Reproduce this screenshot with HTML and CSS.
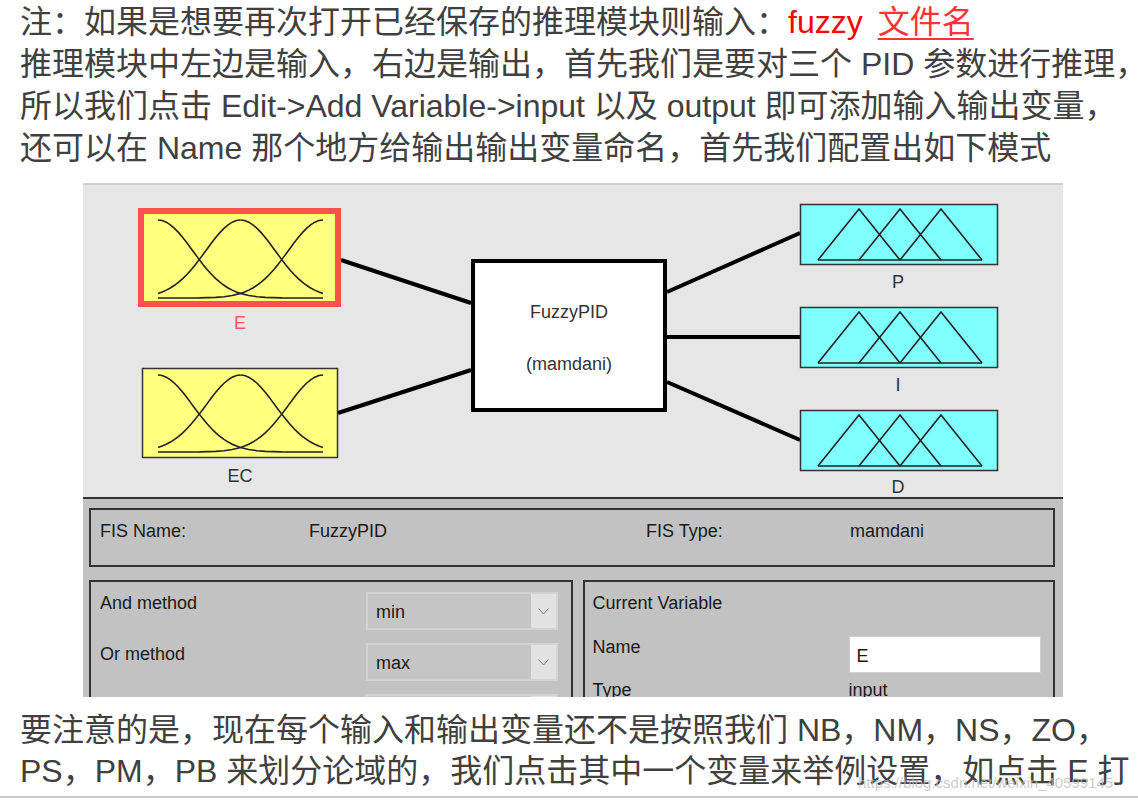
FILE: index.html
```html
<!DOCTYPE html>
<html lang="zh-CN">

<head>
  <meta charset="UTF-8">
  <meta name="viewport" content="width=device-width, initial-scale=1.0">
  <title>FuzzyPID</title>
  <link rel="stylesheet" href="styles.css">
</head>

<body>
  <div class="para intro">
    <div>注：如果是想要再次打开已经保存的推理模块则输入：<span class="red">fuzzy</span><span class="red link">文件名</span></div>
    <div>推理模块中左边是输入，右边是输出，首先我们是要对三个 PID 参数进行推理，</div>
    <div>所以我们点击 Edit-&gt;Add Variable-&gt;input 以及 output 即可添加输入输出变量，</div>
    <div>还可以在 Name 那个地方给输出输出变量命名，首先我们配置出如下模式</div>
  </div>

  <div class="shot">
    <!-- FIS 结构图 -->
    <svg class="diagram" width="980" height="314" viewBox="0 0 980 314">
      <defs>
        <path id="half" class="curve" d="M0,0 L5,0.7 L10,2.8 L15,6.2 L20,10.7 L25,16.2 L30,22.5 L35,29.3 L40,36.5 L45,43.7 L50,50.8 L55,57.6 L60,64 L65,69.8 L70,75.1 L75,79.7 L80,83.7 L85,87.1 L90,89.9 L95,92.3 L100,94.1 L110,96.8 L120,98.3 L130,99.2 L150,99.8 L200,100" />
        <path id="halfc" class="curve" d="M0,0 L5,0.7 L10,2.8 L15,6.2 L20,10.7 L25,16.2 L30,22.5 L35,29.3 L40,36.5 L45,43.7 L50,50.8 L55,57.6 L60,64 L65,69.8 L70,75.1 L75,79.7 L80,83.7 L85,87.1 L90,89.9 L95,92.3 L100,94.1" />
        <symbol id="gauss" viewBox="0 0 200 100" preserveAspectRatio="none" overflow="visible">
          <use href="#half" />
          <use href="#half" transform="translate(200,0) scale(-1,1)" />
          <use href="#halfc" transform="translate(100,0)" />
          <use href="#halfc" transform="translate(100,0) scale(-1,1)" />
        </symbol>
        <symbol id="tri" viewBox="0 0 4 1" preserveAspectRatio="none" overflow="visible">
          <polyline class="curve" points="0,1 1,0 2,1" />
          <polyline class="curve" points="1,1 2,0 3,1" />
          <polyline class="curve" points="2,1 3,0 4,1" />
          <polyline class="curve" points="0,1 4,1" />
        </symbol>
      </defs>

      <rect x="0" y="0" width="980" height="2" fill="#cfcfcf" />

      <!-- 连线 -->
      <g class="wire">
        <line x1="258" y1="77" x2="388" y2="120" />
        <line x1="255" y1="230" x2="388" y2="187" />
        <line x1="584" y1="109" x2="717" y2="50" />
        <line x1="584" y1="154" x2="717" y2="154" />
        <line x1="584" y1="199" x2="717" y2="257" />
      </g>

      <!-- 输入 -->
      <rect class="in-box selected" x="58" y="28" width="197" height="93" />
      <use href="#gauss" x="75" y="37" width="165" height="78" />
      <text class="label red-label" x="157" y="146">E</text>

      <rect class="in-box" x="59.5" y="185.5" width="195" height="89" />
      <use href="#gauss" x="75" y="192" width="165" height="77" />
      <text class="label" x="157" y="299">EC</text>

      <!-- 推理模块 -->
      <rect class="fis-node" x="390" y="78" width="192" height="149" />
      <text class="label" x="486" y="135">FuzzyPID</text>
      <text class="label" x="486" y="187">(mamdani)</text>

      <!-- 输出 -->
      <rect class="out-box" x="717.5" y="21.5" width="197" height="60" />
      <use href="#tri" x="735" y="26" width="164" height="51" />
      <text class="label" x="815" y="105">P</text>

      <rect class="out-box" x="717.5" y="124.5" width="197" height="60" />
      <use href="#tri" x="735" y="129" width="164" height="51" />
      <text class="label" x="815" y="208">I</text>

      <rect class="out-box" x="717.5" y="227.5" width="197" height="60" />
      <use href="#tri" x="735" y="232" width="164" height="51" />
      <text class="label" x="815" y="310">D</text>
    </svg>

    <div class="panel">
      <div class="fis">
        <span>FIS Name:</span>
        <span>FuzzyPID</span>
        <span>FIS Type:</span>
        <span>mamdani</span>
      </div>

      <div class="cols">
        <div class="box methods">
          <span class="lbl">And method</span>
          <div class="select"><span class="val">min</span><span class="arrow"><svg width="11" height="7" viewBox="0 0 11 7"><polyline points="0.5,0.5 5.5,6 10.5,0.5" /></svg></span></div>

          <span class="lbl">Or method</span>
          <div class="select"><span class="val">max</span><span class="arrow"><svg width="11" height="7" viewBox="0 0 11 7"><polyline points="0.5,0.5 5.5,6 10.5,0.5" /></svg></span></div>

          <!-- 第三行被截图截断，只露出下拉框顶边 -->
          <span class="lbl"></span>
          <div class="select"><span class="val"></span><span class="arrow"></span></div>
        </div>

        <div class="box current">
          <span class="lbl title">Current Variable</span>
          <span class="lbl name">Name</span>
          <div class="field">E</div>
          <span class="lbl">Type</span>
          <span class="lbl">input</span>
        </div>
      </div>
    </div>
  </div>

  <div class="para outro">
    <div>要注意的是，现在每个输入和输出变量还不是按照我们 NB，NM，NS，ZO，</div>
    <div>PS，PM，PB 来划分论域的，我们点击其中一个变量来举例设置，如点击 E 打</div>
    <span class="mark">https://blog.csdn.net/weixin_40599145</span>
  </div>
  <div class="rule"></div>
</body>

</html>
```

FILE: styles.css
```css
body {
  margin: 0;
  background: #fff;
  color: #404040;
  font-family: "Liberation Sans", "Noto Sans CJK SC", sans-serif;
}

.para {
  padding-left: 20px;
  font-size: 32px;
  line-height: 42px;
  white-space: nowrap;
}

.intro {
  padding-top: 1px;
}

.red {
  color: #f00;
}

.link {
  color: #f33;
  margin-left: 15px;
  text-decoration: underline;
  text-decoration-thickness: 2px;
  text-underline-offset: 5px;
}

/* 截图区域 */
.shot {
  width: 980px;
  height: 514px;
  margin: 14px 0 0 83px;
  overflow: hidden;
}

.diagram {
  display: block;
  background: #e6e6e6;
}

.curve {
  fill: none;
  stroke: #222;
  stroke-width: 1.6px;
  vector-effect: non-scaling-stroke;
}

.wire line {
  stroke: #000;
  stroke-width: 4px;
}

.in-box {
  fill: #ffff80;
  stroke: #333;
  stroke-width: 1.5px;
}

.in-box.selected {
  stroke: #ff5050;
  stroke-width: 6px;
}

.out-box {
  fill: #80ffff;
  stroke: #333;
  stroke-width: 1.5px;
}

.fis-node {
  fill: #fff;
  stroke: #000;
  stroke-width: 4px;
}

.label {
  font-family: "Liberation Sans", sans-serif;
  font-size: 18px;
  fill: #333;
  text-anchor: middle;
}

.red-label {
  fill: #ff5a5a;
}

/* 下方属性面板 */
.panel {
  height: 200px;
  box-sizing: border-box;
  padding: 9px 8px 0 6px;
  border-top: 2px solid #333;
  background: #c2c2c2;
  overflow: hidden;
  font-size: 18px;
  line-height: 20px;
  color: #1a1a1a;
}

.fis {
  height: 59px;
  box-sizing: border-box;
  padding: 11px 0 0 9px;
  border: 2px solid #333;
  display: grid;
  grid-template-columns: 209px 337px 204px auto;
  align-content: start;
}

.cols {
  display: flex;
  gap: 10px;
  margin-top: 13px;
}

.box {
  height: 170px;
  box-sizing: border-box;
  border: 2px solid #333;
  display: grid;
  align-content: start;
}

.methods {
  width: 484px;
  padding: 10px 0 0 9px;
  grid-template-columns: 266px 192px;
  grid-auto-rows: 38px;
  row-gap: 13px;
}

.methods .lbl {
  padding-top: 1px;
}

.select {
  display: flex;
  box-sizing: border-box;
  border: 2px solid #d3d3d3;
  background: #c5c5c5;
}

.val {
  flex: 1;
  padding-left: 8px;
  align-self: center;
  padding-top: 1px;
}

.arrow {
  width: 25px;
  display: flex;
  align-items: center;
  justify-content: center;
  background: #e2e2e2;
}

.arrow polyline {
  fill: none;
  stroke: #777;
  stroke-width: 1px;
}

.current {
  width: 473px;
  padding: 11px 0 0 8px;
  grid-template-columns: 256px 192px;
}

.current .title {
  grid-column: 1 / 3;
  margin-bottom: 23px;
}

.current .name {
  padding-top: 1px;
}

.field {
  height: 37px;
  box-sizing: border-box;
  padding: 9px 0 0 7px;
  margin-bottom: 7px;
  border: 1px solid #d0d0d0;
  background: #fff;
}

/* 下方文字 */
.outro {
  position: relative;
  margin-top: 13px;
  line-height: 41px;
}

.mark {
  position: absolute;
  left: 858px;
  top: 64px;
  font-size: 15px;
  line-height: 18px;
  color: rgba(185, 185, 185, 0.75);
}

.rule {
  height: 2px;
  margin-top: 4px;
  background: #cbcbcb;
}
```
